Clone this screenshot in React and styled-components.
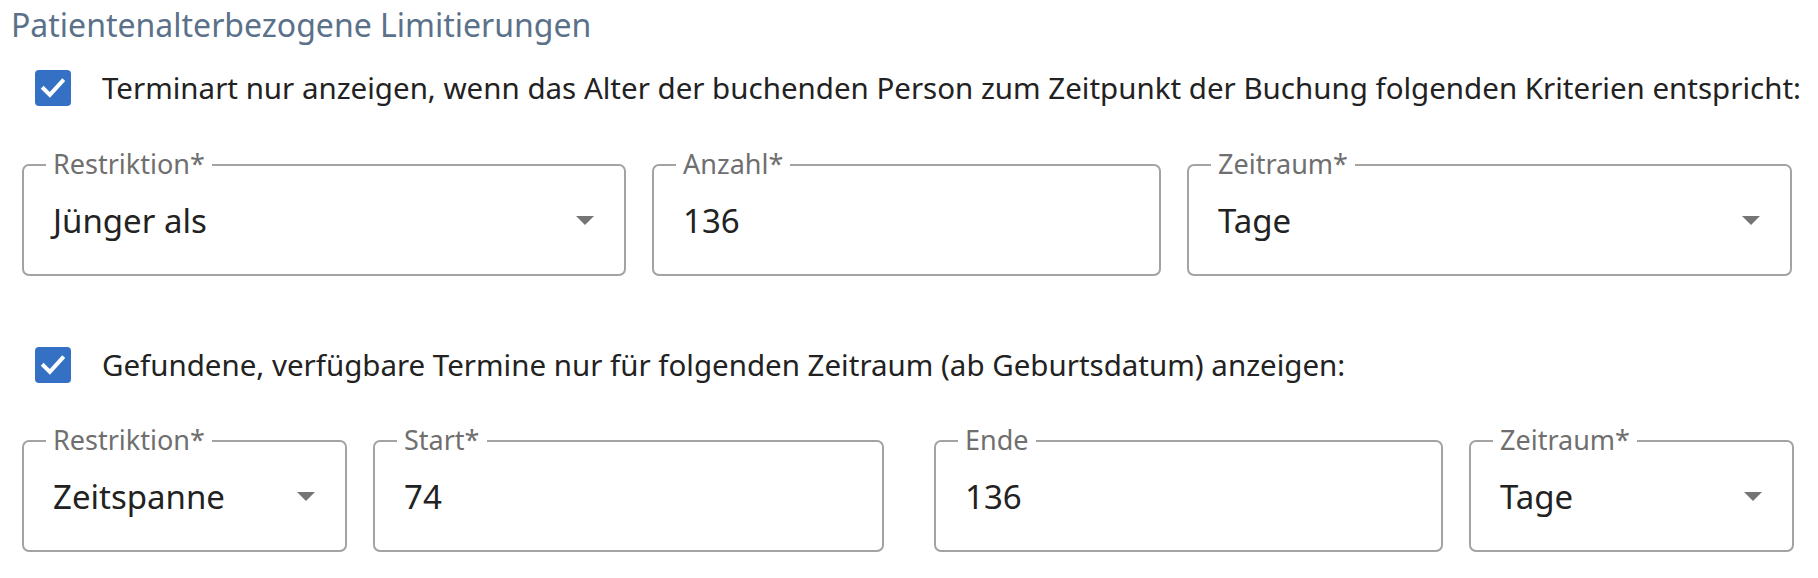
import React from "react"
import styled, { createGlobalStyle } from "styled-components"

const GlobalStyle = createGlobalStyle`
    body {
        margin: 0;
        background: #ffffff;
        font-family: "Noto Sans", "Open Sans", sans-serif;
        color: #222222;
    }
`

const Container = styled.div`
    width: 1818px;
    height: 578px;
    box-sizing: border-box;
    padding: 5px 0 0 22px;
    overflow: hidden;
`

const Title = styled.h2`
    margin: 0 0 0 -11px;
    font-size: 32px;
    font-weight: 400;
    line-height: 40px;
    color: #5a7189;
`

const CheckRow = styled.label`
    display: flex;
    align-items: center;
    gap: 31px;
    margin-top: ${(p) => p.top}px;
    margin-left: 13px;
    font-size: 29.5px;
    line-height: 40px;
    white-space: nowrap;
    color: #222222;
`

const Box = styled.span`
    flex: none;
    width: 36px;
    height: 36px;
    border-radius: 4px;
    background: #3471c5;
    display: flex;
    align-items: center;
    justify-content: center;
`

const FieldRow = styled.div`
    display: grid;
    grid-template-columns: ${(p) => p.cols};
    column-gap: 26px;
    margin-top: ${(p) => p.top}px;
`

const Field = styled.div`
    position: relative;
    height: 112px;
    box-sizing: border-box;
    border: 2px solid #a3a3a3;
    border-radius: 7px;
    display: flex;
    align-items: center;
    padding: 0 30px 0 29px;
    margin-left: ${(p) => p.offset || 0}px;
`

const Label = styled.span`
    position: absolute;
    top: -18px;
    left: 22px;
    padding: 0 7px;
    background: #ffffff;
    font-size: 27px;
    line-height: 32px;
    white-space: nowrap;
    color: #6f6f6f;
`

const Value = styled.span`
    flex: 1;
    font-size: 33px;
    white-space: nowrap;
    color: #222222;
`

const Arrow = styled.span`
    width: 0;
    height: 0;
    border-left: 9px solid transparent;
    border-right: 9px solid transparent;
    border-top: 9px solid #757575;
`

const Check = () => (
    <Box>
        <svg width="30" height="30" viewBox="0 0 24 24" fill="none" stroke="#ffffff" strokeWidth="3.2" strokeLinecap="square" strokeLinejoin="miter">
            <polyline points="4.5 12.5 9.5 17.5 19.5 6.5"></polyline>
        </svg>
    </Box>
)

const Input = ({ label, value, select, offset }) => (
    <Field offset={offset}>
        <Label>{label}</Label>
        <Value>{value}</Value>
        {select && <Arrow />}
    </Field>
)

const App = () => {
    return (
        <Container>
            <GlobalStyle />
            <Title>Patientenalterbezogene Limitierungen</Title>
            <CheckRow top={23}>
                <Check />
                Terminart nur anzeigen, wenn das Alter der buchenden Person zum Zeitpunkt der Buchung folgenden Kriterien entspricht:
            </CheckRow>
            <FieldRow top={56} cols="604px 509px 605px">
                <Input label="Restriktion*" value="Jünger als" select />
                <Input label="Anzahl*" value="136" />
                <Input label="Zeitraum*" value="Tage" select />
            </FieldRow>
            <CheckRow top={69}>
                <Check />
                Gefundene, verfügbare Termine nur für folgenden Zeitraum (ab Geburtsdatum) anzeigen:
            </CheckRow>
            <FieldRow top={55} cols="325px 511px 533px 325px">
                <Input label="Restriktion*" value="Zeitspanne" select />
                <Input label="Start*" value="74" />
                <Input label="Ende" value="136" offset={24} />
                <Input label="Zeitraum*" value="Tage" select />
            </FieldRow>
        </Container>
    )
}
export default App
